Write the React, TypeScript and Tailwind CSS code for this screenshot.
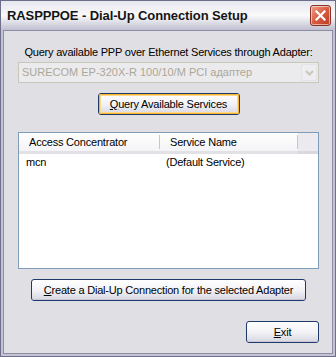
import { Fragment } from "react";

const font = "font-['Liberation_Sans',Arial,sans-serif]";

function XpButton({ label, hotkey, width, isDefault }: { label: string; hotkey: number; width: string; isDefault?: boolean }) {
  return (
    <button
      className={`${width} h-[22px] rounded-[3px] border border-[#1d3a6b] bg-gradient-to-b from-[#ffffff] via-[#f3f3f7] to-[#d8d7e2] p-0 text-[11px] tracking-[-0.2px] text-black ${font}`}
    >
      <span
        className={`flex h-full w-full items-center justify-center rounded-[2px] ${
          isDefault ? "shadow-[inset_0_0_0_1px_#f7b532,inset_0_0_0_2px_#fcd98b]" : "shadow-[inset_0_-1px_0_#c9c8d6]"
        }`}
      >
        {label.slice(0, hotkey)}
        <span className="underline underline-offset-1">{label[hotkey]}</span>
        {label.slice(hotkey + 1)}
      </span>
    </button>
  );
}

function CloseButton() {
  return (
    <div className="flex h-[21px] w-[21px] items-center justify-center rounded-[3px] border border-[#8b3024] bg-gradient-to-br from-[#ee9f8c] via-[#d85b40] to-[#bb3a21] shadow-[inset_0_0_0_1px_rgba(255,255,255,0.55)]">
      <svg width="11" height="11" viewBox="0 0 11 11">
        <path d="M1.5 1.5 L9.5 9.5 M9.5 1.5 L1.5 9.5" stroke="white" strokeWidth="2.2" strokeLinecap="square" />
      </svg>
    </div>
  );
}

export default function App() {
  const rows = [{ ac: "mcn", sn: "(Default Service)" }];

  return (
    <div className={`h-[357px] w-[336px] overflow-hidden bg-[#6d6d8c] p-px ${font}`}>
      <div className="flex h-full flex-col bg-[#c3c3d3]">
        {/* title bar */}
        <div className="flex h-[29px] shrink-0 items-center justify-between bg-gradient-to-b from-[#e6e6ee] via-[#fafafb] to-[#bfbfd0] pl-[6px] pr-[4px]">
          <span className="mt-px text-[13px] font-bold tracking-[-0.1px] text-[#151515]">RASPPPOE - Dial-Up Connection Setup</span>
          <CloseButton />
        </div>

        {/* client area */}
        <div className="mx-[2px] mb-[2px] flex flex-1 flex-col border border-[#8d8da6] bg-[#e0dfe3] pl-[14px] pr-[13px]">
          <p className="mt-[15px] text-center text-[11px] leading-[13px] tracking-[-0.2px] text-black">
            Query available PPP over Ethernet Services through Adapter:
          </p>

          {/* disabled combo */}
          <div className="mt-[3px] flex h-[21px] items-center border border-[#c9c7ba] bg-[#ebeaed] pl-[3px] pr-px">
            <span className="flex-1 text-[11px] text-[#aca899]">SURECOM EP-320X-R 100/10/M PCI адаптер</span>
            <div className="flex h-[17px] w-[16px] items-center justify-center rounded-[2px] border border-[#e4e3e8] bg-[#eeedf1]">
              <svg width="9" height="6" viewBox="0 0 9 6">
                <path d="M1 1 L4.5 4.5 L8 1" fill="none" stroke="#c9c7ba" strokeWidth="2" />
              </svg>
            </div>
          </div>

          <div className="mt-[10px] flex justify-center">
            <XpButton label="Query Available Services" hotkey={0} width="w-[142px]" isDefault />
          </div>

          {/* list view */}
          <div className="mt-[17px] flex h-[137px] flex-col border border-[#7f9db9] bg-white">
            <div className="flex h-[21px] shrink-0 text-[11px] tracking-[-0.2px] text-black">
              <div className="flex w-[140px] items-center border-b-[3px] border-[#e2e1e6] bg-gradient-to-b from-white to-[#f4f4f6] pl-[10px]">
                Access Concentrator
              </div>
              <div className="flex w-[139px] items-center border-b-[3px] border-[#e2e1e6] bg-gradient-to-b from-white to-[#f4f4f6]">
                <span className="mr-[10px] h-[14px] w-px bg-[#c7c6cf]" />
                Service Name
                <span className="ml-auto h-[14px] w-px bg-[#c7c6cf]" />
              </div>
              <div className="flex-1 border-b-[3px] border-[#d9d8df] bg-[#ebeaee]" />
            </div>
            {rows.map((r) => (
              <Fragment key={r.ac}>
                <div className="mt-px flex h-[14px] items-center text-[11px] tracking-[-0.2px] text-black">
                  <span className="w-[147px] pl-[7px]">{r.ac}</span>
                  <span>{r.sn}</span>
                </div>
              </Fragment>
            ))}
          </div>

          <div className="mt-[10px] flex justify-center">
            <XpButton label="Create a Dial-Up Connection for the selected Adapter" hotkey={0} width="w-[275px]" />
          </div>

          <div className="mt-[20px] flex justify-end">
            <XpButton label="Exit" hotkey={0} width="w-[73px]" />
          </div>
        </div>
      </div>
    </div>
  );
}
